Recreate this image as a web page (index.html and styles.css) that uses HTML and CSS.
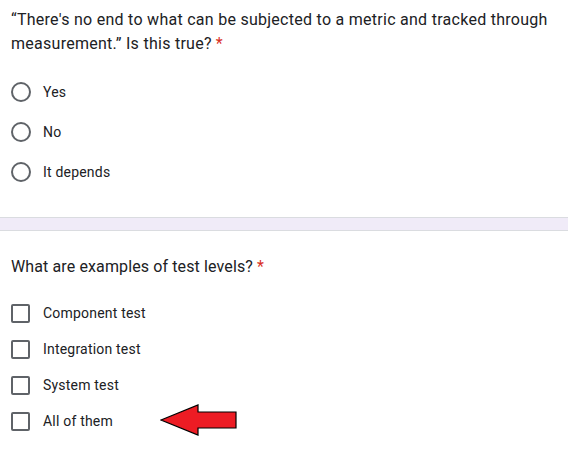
FILE: index.html
```html
<!DOCTYPE html>
<html>
<head>
<meta charset="utf-8">
<link rel="stylesheet" href="styles.css">
</head>
<body>
<section class="question q1">
  <div class="title">“There's no end to what can be subjected to a metric and tracked through measurement.” Is this true?<span class="req">*</span></div>
  <div class="options">
    <div class="opt"><span class="radio"></span><span class="label">Yes</span></div>
    <div class="opt"><span class="radio"></span><span class="label">No</span></div>
    <div class="opt"><span class="radio"></span><span class="label">It depends</span></div>
  </div>
</section>
<div class="band"></div>
<section class="question q2">
  <div class="title">What are examples of test levels?<span class="req">*</span></div>
  <div class="options">
    <div class="opt check"><span class="box"></span><span class="label">Component test</span></div>
    <div class="opt check"><span class="box"></span><span class="label">Integration test</span></div>
    <div class="opt check"><span class="box"></span><span class="label">System test</span></div>
    <div class="opt check last"><span class="box"></span><span class="label">All of them</span>
      <svg class="arrow" width="80" height="34" viewBox="0 0 80 34">
        <polygon points="1,16 38,1 38,8 76,8 76,24 38,24 38,31" fill="#ed1c24" stroke="#000" stroke-width="1.2" stroke-linejoin="miter"/>
      </svg>
    </div>
  </div>
</section>
</body>
</html>
```
FILE: styles.css
```css
html, body {
  margin: 0;
  padding: 0;
  background: #fff;
}
body {
  width: 568px;
  height: 457px;
  overflow: hidden;
  font-family: Roboto, "Liberation Sans", Arial, sans-serif;
  color: #202124;
}
.question {
  padding: 8px 11px 0 11px;
}
.q1 {
  padding-bottom: 25px;
}
.q2 {
  padding-top: 24px;
}
.title {
  font-size: 16px;
  line-height: 24px;
  letter-spacing: 0.27px;
  color: #202124;
}
.q2 .title {
  letter-spacing: 0.12px;
}
.req {
  color: #d93025;
  margin-left: 4px;
}
.options {
  margin-top: 16px;
}
.opt {
  display: flex;
  align-items: center;
  height: 40px;
  font-size: 14px;
  letter-spacing: 0.2px;
}
.opt.check {
  height: 36px;
}
.radio {
  box-sizing: border-box;
  width: 20px;
  height: 20px;
  border: 2px solid #5f6368;
  border-radius: 50%;
  flex: none;
}
.box {
  box-sizing: border-box;
  width: 19px;
  height: 19px;
  border: 2px solid #5f6368;
  border-radius: 2px;
  flex: none;
}
.label {
  margin-left: 12px;
}
.check .label {
  margin-left: 13px;
}
.band {
  height: 12px;
  background: #f0ebf8;
  border-top: 1px solid #dadce0;
  border-bottom: 1px solid #dadce0;
}
.last {
  position: relative;
}
.arrow {
  position: absolute;
  left: 149px;
  top: 1px;
}
```
